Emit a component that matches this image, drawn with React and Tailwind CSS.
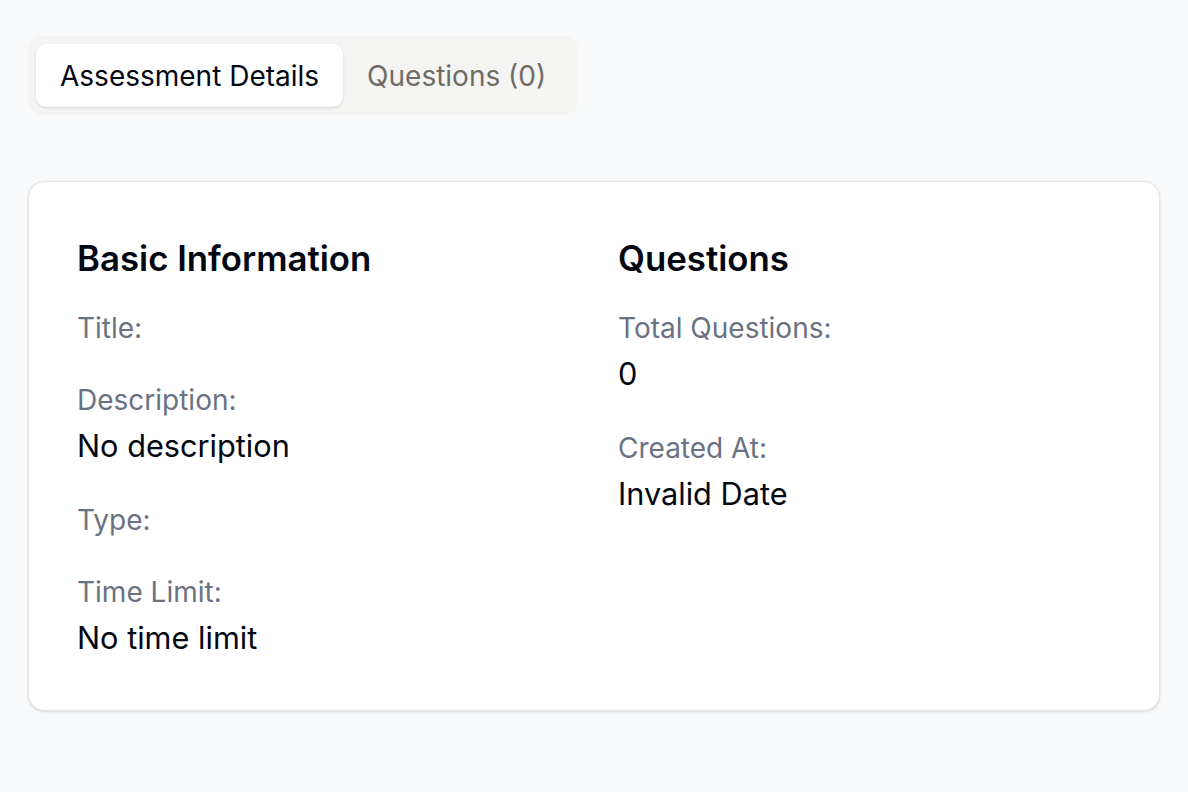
import { useState } from 'react';

const basicInfo = [
    { label: 'Title:', value: '' },
    { label: 'Description:', value: 'No description' },
    { label: 'Type:', value: '' },
    { label: 'Time Limit:', value: 'No time limit' },
];

const questionInfo = [
    { label: 'Total Questions:', value: '0' },
    { label: 'Created At:', value: 'Invalid Date' },
];

function Field({ label, value }) {
    return (
        <div className="flex flex-col">
            <p className="text-[28px] leading-[40px] text-gray-500">{label}</p>
            {value ? <p className="mt-[4px] text-[30.7px] leading-[44px] text-gray-950">{value}</p> : null}
        </div>
    );
}

function Section({ title, fields }) {
    return (
        <div>
            <h3 className="text-[34.8px] leading-[56px] font-semibold text-gray-950 mb-[22px]">{title}</h3>
            <div className="flex flex-col gap-[32px]">
                {fields.map(f => (
                    <Field key={f.label} label={f.label} value={f.value} />
                ))}
            </div>
        </div>
    );
}

export default function App() {
    const [tab, setTab] = useState('details');

    return (
        <div className="min-h-screen bg-[#f8f9fa] px-[28px] pt-[36px] pb-10 font-['Inter',sans-serif]">
            <div className="inline-flex items-center rounded-[14px] bg-[#f4f4f2] p-[8px]">
                <button
                    onClick={() => setTab('details')}
                    className={`h-[63px] px-[24px] rounded-[10px] text-[28px] ${tab === 'details' ? 'bg-white text-gray-950 shadow-sm' : 'text-[#6f6b67]'}`}
                >
                    Assessment Details
                </button>
                <button
                    onClick={() => setTab('questions')}
                    className={`h-[63px] px-[24px] rounded-[10px] text-[28px] ${tab === 'questions' ? 'bg-white text-gray-950 shadow-sm' : 'text-[#6f6b67]'}`}
                >
                    Questions (0)
                </button>
            </div>

            <div className="mt-[66px] bg-white border border-[#e4e4e4] rounded-[16px] shadow-sm p-[48px] pb-[50px]">
                <div className="grid grid-cols-2 gap-[48px]">
                    <Section title="Basic Information" fields={basicInfo} />
                    <Section title="Questions" fields={questionInfo} />
                </div>
            </div>
        </div>
    );
}
